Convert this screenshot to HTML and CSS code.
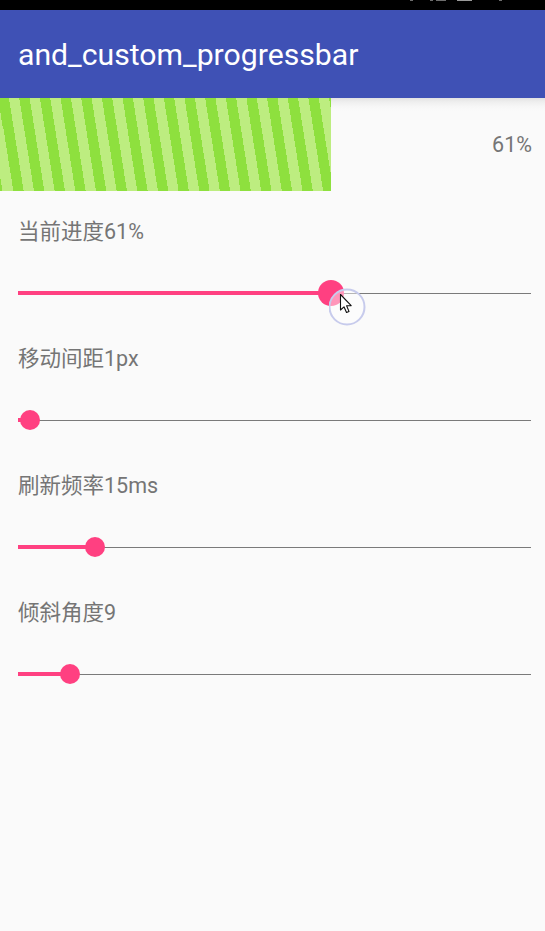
FILE: index.html
```html
<!DOCTYPE html>
<html>
<head>
<meta charset="utf-8">
<link rel="stylesheet" href="styles.css">
</head>
<body>
<div class="status">
  <span class="si si1"></span><span class="si si2"></span><span class="si si3"></span><span class="si si4"></span><span class="si si5"></span>
</div>
<header class="appbar"><h1 class="title">and_custom_progressbar</h1></header>
<section class="progress">
  <div class="bar" style="width:331px"></div>
  <span class="pct">61%</span>
</section>
<main class="controls">
  <div class="item">
    <div class="label">当前进度61%</div>
    <div class="slider">
      <div class="rail">
        <div class="active" style="width:313px"></div>
        <div class="thumb pressed"></div>
        <div class="rest"></div>
      </div>
      <svg class="pointer" width="40" height="42" viewBox="0 0 40 42">
        <circle cx="18" cy="19" r="17.5" fill="rgba(255,255,255,0.45)" stroke="#c7cbec" stroke-width="2"/>
        <path d="M11.5 6.5 L11.5 22 L15 18.8 L17.5 24.5 L20 23.4 L17.6 17.8 L22.2 17.6 Z" fill="#fff" stroke="#111" stroke-width="1.1" stroke-linejoin="round"/>
      </svg>
    </div>
  </div>
  <div class="item">
    <div class="label">移动间距1px</div>
    <div class="slider">
      <div class="rail">
        <div class="active" style="width:12px"></div>
        <div class="thumb"></div>
        <div class="rest"></div>
      </div>
    </div>
  </div>
  <div class="item">
    <div class="label">刷新频率15ms</div>
    <div class="slider">
      <div class="rail">
        <div class="active" style="width:77px"></div>
        <div class="thumb"></div>
        <div class="rest"></div>
      </div>
    </div>
  </div>
  <div class="item">
    <div class="label">倾斜角度9</div>
    <div class="slider">
      <div class="rail">
        <div class="active" style="width:52px"></div>
        <div class="thumb"></div>
        <div class="rest"></div>
      </div>
    </div>
  </div>
</main>
</body>
</html>
```
FILE: styles.css
```css
* { box-sizing: border-box; }
html, body { margin: 0; padding: 0; }
body {
  width: 545px;
  height: 931px;
  overflow: hidden;
  background: #fafafa;
  font-family: Roboto, "Noto Sans CJK SC", sans-serif;
}
.status {
  height: 10px;
  background: #000;
  display: flex;
  align-items: flex-start;
  gap: 3px;
  padding-left: 410px;
}
.si { display: block; background: #6e6e6e; height: 1px; }
.si1 { width: 3px; margin-right: 14px; }
.si2 { width: 3px; }
.si3 { width: 10px; margin-right: 8px; }
.si4 { width: 15px; margin-right: 24px; background: #9a9a9a; }
.si5 { width: 3px; }
.appbar {
  height: 88px;
  background: #3f51b5;
  display: flex;
  align-items: center;
  padding-left: 18px;
  position: relative;
  z-index: 1;
}
.title {
  margin: 0;
  color: #fff;
  font-family: Roboto, sans-serif;
  font-weight: 400;
  font-size: 30.2px;
  line-height: 34px;
  padding-top: 2px;
}
.progress {
  height: 93px;
  display: flex;
  align-items: center;
  justify-content: space-between;
  background: linear-gradient(to bottom, #e2e2e2 0px, #efefef 4px, #f7f7f7 9px, #fafafa 13px);
}
.bar {
  align-self: stretch;
  background: repeating-linear-gradient(81deg, #bded80 0px, #bded80 10.2px, #8ee03e 10.2px, #8ee03e 20.4px);
  background-position: 3px 0;
}
.pct {
  font-size: 21.5px;
  color: #757575;
  padding-right: 13px;
}
.controls {
  padding: 29px 14px 0 18px;
}
.label {
  height: 24px;
  line-height: 24px;
  font-size: 21.5px;
  color: #757575;
  font-family: Roboto, "Noto Sans CJK SC", sans-serif;
}
.slider {
  height: 103px;
  padding-top: 39px;
  position: relative;
}
.rail {
  height: 20px;
  display: flex;
  align-items: center;
}
.active {
  height: 4px;
  background: #ff4081;
  flex: none;
}
.rest {
  flex: 1;
  height: 1px;
  background: #7a7a7a;
}
.thumb {
  flex: none;
  width: 20px;
  height: 20px;
  border-radius: 50%;
  background: #ff4081;
  margin: 0 -10px;
  position: relative;
  z-index: 1;
}
.thumb.pressed {
  width: 26px;
  height: 26px;
  margin: 0 -13px;
}
.pointer {
  position: absolute;
  left: 311px;
  top: 44px;
  z-index: 2;
}
```
